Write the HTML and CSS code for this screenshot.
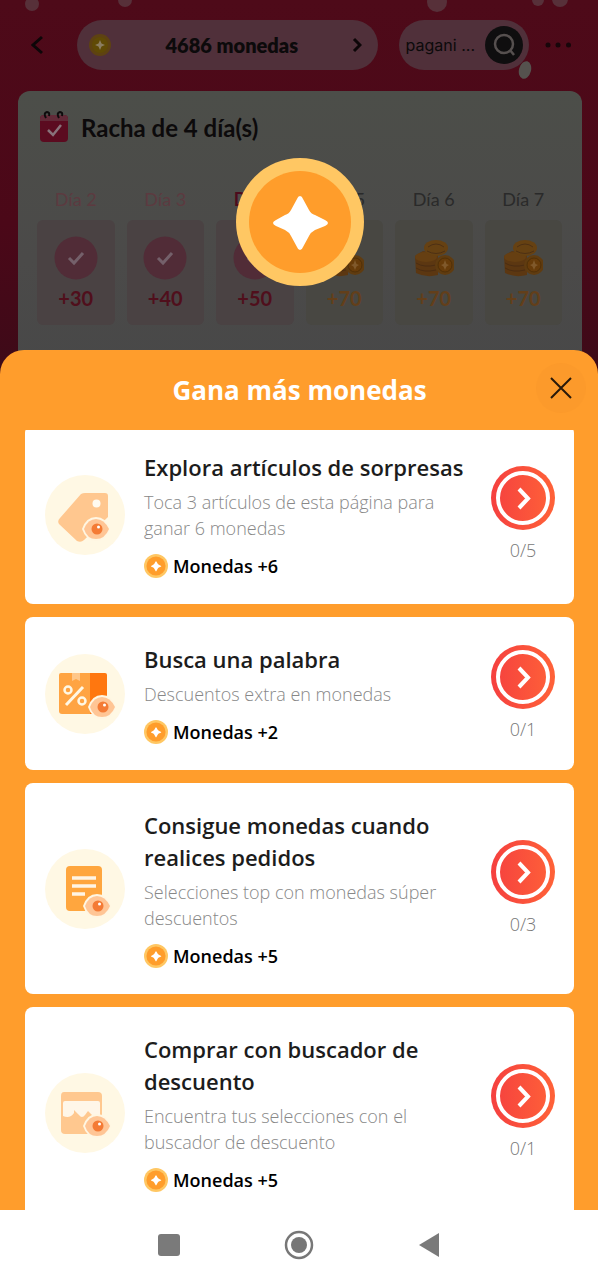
FILE: index.html
```html
<!DOCTYPE html>
<html lang="es">
<head>
<meta charset="utf-8">
<meta name="viewport" content="width=device-width, initial-scale=1">
<title>Gana más monedas</title>
<link rel="stylesheet" href="styles.css">
</head>
<body>
<svg class="defs" aria-hidden="true">
  <defs>
    <linearGradient id="red" x1="0" y1="0" x2="1" y2="0"><stop offset="0" stop-color="#f5403f"/><stop offset="1" stop-color="#ff6238"/></linearGradient>
    <symbol id="coin" viewBox="0 0 128 128">
      <circle cx="64" cy="64" r="64" fill="#ffc763"/><circle cx="64" cy="64" r="51" fill="#ff9d2b"/>
      <path d="M64 38Q66 38 67 41L73 52Q75 56 79 57L89 62Q92 63.500 92 65Q92 66.500 89 68L79 72Q75 74 73 78L67 89Q66 92 64 92Q62 92 61 89L55 78Q53 74 49 72L40 68Q37 66.500 37 65Q37 63.500 40 62L49 57Q53 56 55 52L61 41Q62 38 64 38Z" fill="#fff"/>
    </symbol>
    <symbol id="go" viewBox="0 0 64 64">
      <circle cx="32" cy="32" r="32" fill="url(#red)"/><circle cx="32" cy="32" r="25" fill="none" stroke="#fff" stroke-width="4"/>
      <path d="M28 23L37 32.500L28 42" fill="none" stroke="#fff" stroke-width="4"/>
    </symbol>
    <symbol id="eye" viewBox="0 0 28 24">
      <path d="M0 12Q4 0 14 0T28 12Q24 24 14 24T0 12Z" fill="#fff6e2"/>
      <path d="M2 12Q6 2 14 2T27 12Q23 22 14 22T2 12Z" fill="#ffc595"/>
      <circle cx="15" cy="12" r="5.500" fill="#f47b35"/><circle cx="16.500" cy="10" r="1.500" fill="#fff"/>
    </symbol>
    <symbol id="done" viewBox="0 0 44 44">
      <circle cx="22" cy="22" r="21.500" fill="#512c37"/><path d="M15 22L20 27L29 17" fill="none" stroke="#74606a" stroke-width="3"/>
    </symbol>
    <symbol id="pile" viewBox="0 0 40 38">
      <path d="M1 17L9 12L24 15V36Q12 39 2 34Z" fill="#5c3711"/>
      <ellipse cx="12" cy="18" rx="11" ry="5" fill="#663f12"/>
      <path d="M2 24Q10 29 22 26M2 29Q10 34 22 31" fill="none" stroke="#4b2d12" stroke-width="1"/>
      <ellipse cx="22" cy="9" rx="12" ry="8" fill="#664112"/><path d="M14 8Q22 2 30 8M13 12Q22 17 31 12" fill="none" stroke="#4d3014" stroke-width="1"/>
      <circle cx="31" cy="26" r="10" fill="#603c10"/><circle cx="31" cy="26" r="7" fill="#683c0a" stroke="#503008"/>
      <path d="M31 21L32.500 25L35 26L32.500 27.500L31 31L29.500 27.500L27 26L29.500 25Z" fill="#80592b"/>
    </symbol>
  </defs>
</svg>

<div class="screen">
  <section class="scene">
    <svg class="snow" viewBox="0 0 598 90" aria-hidden="true">
      <g fill="#573039"><circle cx="32" cy="4" r="7"/><circle cx="125" cy="0" r="7"/><circle cx="437" cy="2" r="10"/><circle cx="538" cy="0" r="6"/><circle cx="560" cy="-1" r="8"/></g>
    </svg>
    <header class="topbar">
      <button class="plain back" aria-label="Volver"><svg width="12" height="20" viewBox="0 0 12 20"><path d="M11 2L2 10L11 18" fill="none" stroke="#0d0608" stroke-width="3"/></svg></button>
      <button class="plain pill balance">
        <svg width="24" height="24" viewBox="0 0 24 24"><circle cx="12" cy="12" r="11" fill="#5e4212"/><circle cx="12" cy="12" r="8" fill="#604a05"/><path d="M12 7L13.500 10.500L17 12L13.500 13.500L12 17L10.500 13.500L7 12L10.500 10.500Z" fill="#8b7d60"/></svg>
        <span class="balance-text">4686 monedas</span>
        <svg width="10" height="16" viewBox="0 0 10 16"><path d="M2 2L8 8L2 14" fill="none" stroke="#0d0608" stroke-width="3"/></svg>
      </button>
      <button class="plain pill search" aria-label="Buscar pagani">
        <span>pagani ...</span>
        <svg width="38" height="38" viewBox="0 0 38 38"><circle cx="19" cy="19" r="19" fill="#0f0e0f"/><circle cx="19" cy="18" r="9" fill="none" stroke="#56504f" stroke-width="2.500"/><path d="M25 24L29 29" stroke="#56504f" stroke-width="2.500"/></svg>
        <svg class="flake" width="14" height="20" viewBox="0 0 14 20" aria-hidden="true"><ellipse cx="7" cy="10" rx="6" ry="9" fill="#55524e" transform="rotate(15 7 10)"/></svg>
      </button>
      <button class="plain" aria-label="Más opciones"><svg width="28" height="8" viewBox="0 0 28 8" fill="#17060a"><circle cx="4" cy="4" r="2.500"/><circle cx="14" cy="4" r="2.500"/><circle cx="24.500" cy="4" r="2.500"/></svg></button>
    </header>
    <div class="streak">
      <h1 class="streak-title">
        <svg width="30" height="32" viewBox="0 0 30 32"><rect x="1" y="4" width="28" height="27" rx="4" fill="#5b0b20"/><path d="M1 10V8Q1 4 5 4H25Q29 4 29 8V10Z" fill="#622a38"/><path d="M7 7Q4 2 8 1Q11 1 10 5M20 7Q17 2 21 1Q24 1 23 5" fill="none" stroke="#0e0b0c" stroke-width="2"/><path d="M9 19L14 24L22 14" fill="none" stroke="#88727a" stroke-width="2.500"/></svg>
        <span>Racha de 4 día(s)</span>
      </h1>
      <ol class="days">
        <li class="day past"><span class="day-name">Día 2</span><span class="tile"><svg width="44" height="44"><use href="#done"/></svg><b>+30</b></span></li>
        <li class="day past"><span class="day-name">Día 3</span><span class="tile"><svg width="44" height="44"><use href="#done"/></svg><b>+40</b></span></li>
        <li class="day past today"><span class="day-name">Día 4</span><span class="tile"><svg width="44" height="44"><use href="#done"/></svg><b>+50</b></span></li>
        <li class="day"><span class="day-name">Día 5</span><span class="tile"><svg width="40" height="44"><use href="#pile"/></svg><b>+70</b></span></li>
        <li class="day"><span class="day-name">Día 6</span><span class="tile"><svg width="40" height="44"><use href="#pile"/></svg><b>+70</b></span></li>
        <li class="day"><span class="day-name">Día 7</span><span class="tile"><svg width="40" height="44"><use href="#pile"/></svg><b>+70</b></span></li>
      </ol>
    </div>
    <svg class="big-coin" width="128" height="128" aria-hidden="true"><use href="#coin"/></svg>
  </section>

  <main class="sheet">
    <header class="sheet-head">
      <h2>Gana más monedas</h2>
      <button class="plain close" aria-label="Cerrar"><svg width="22" height="22" viewBox="0 0 22 22"><path d="M1 1L21 21M21 1L1 21" stroke="#28190a" stroke-width="2"/></svg></button>
    </header>
    <div class="tasks">
      <article class="task">
        <svg class="task-icon" viewBox="0 0 80 80"><circle cx="40" cy="40" r="40" fill="#fff8e4"/><path d="M36 19Q38 18 40 18H60Q63 18 63 21V42L39 65Q36 68 32 66L14 49Q12 46 15 43Z" fill="#ffc78f"/><circle cx="51.500" cy="28.500" r="4" fill="#fffaf0"/><use href="#eye" x="37" y="42" width="28" height="24"/></svg>
        <div class="task-body"><h3>Explora artículos de sorpresas</h3><p>Toca 3 artículos de esta página para ganar 6 monedas</p><div class="reward"><svg width="24" height="24"><use href="#coin"/></svg><span>Monedas +6</span></div></div>
        <div class="task-side"><button class="plain" aria-label="Explora artículos de sorpresas"><svg width="64" height="64"><use href="#go"/></svg></button><span>0/5</span></div>
      </article>
      <article class="task">
        <svg class="task-icon" viewBox="0 0 80 80"><circle cx="40" cy="40" r="40" fill="#fff8e4"/><path d="M16 19H46V60H17Q14 60 14 57V21Q14 19 16 19Z" fill="#ffa442"/><path d="M45 19H60Q62 19 62 21V60H45Z" fill="#ff770f"/><path d="M27 19H35V27L31 25L27 27Z" fill="#ffc78a"/><path d="M38 33L21 51" stroke="#fff8e4" stroke-width="3"/><circle cx="23" cy="36" r="3.500" fill="none" stroke="#fff8e4" stroke-width="2.500"/><circle cx="37" cy="47" r="3.500" fill="none" stroke="#fff8e4" stroke-width="2.500"/><use href="#eye" x="43" y="41" width="28" height="24"/></svg>
        <div class="task-body"><h3>Busca una palabra</h3><p>Descuentos extra en monedas</p><div class="reward"><svg width="24" height="24"><use href="#coin"/></svg><span>Monedas +2</span></div></div>
        <div class="task-side"><button class="plain" aria-label="Busca una palabra"><svg width="64" height="64"><use href="#go"/></svg></button><span>0/1</span></div>
      </article>
      <article class="task">
        <svg class="task-icon" viewBox="0 0 80 80"><circle cx="40" cy="40" r="40" fill="#fff8e4"/><rect x="21" y="17" width="36" height="45" rx="4" fill="#ffa63e"/><path d="M27 29H51M27 37H51M27 45H40" stroke="#fff5e5" stroke-width="3.500"/><use href="#eye" x="38" y="45" width="28" height="24"/></svg>
        <div class="task-body"><h3>Consigue monedas cuando realices pedidos</h3><p>Selecciones top con monedas súper descuentos</p><div class="reward"><svg width="24" height="24"><use href="#coin"/></svg><span>Monedas +5</span></div></div>
        <div class="task-side"><button class="plain" aria-label="Consigue monedas cuando realices pedidos"><svg width="64" height="64"><use href="#go"/></svg></button><span>0/3</span></div>
      </article>
      <article class="task">
        <svg class="task-icon" viewBox="0 0 80 80"><circle cx="40" cy="40" r="40" fill="#fff8e4"/><path d="M19 19H53Q57 19 57 23V44Q57 61 53 61H20Q16 61 16 57V23Q16 19 19 19Z" fill="#ffc88f"/><path d="M20 28H53Q55 28 55 30V42Q51 46 47 42L43 38L40 42Q37 46 34 42L29 37V40Q25 46 18 43V30Q18 28 20 28Z" fill="#fff6e8"/><use href="#eye" x="38" y="41" width="28" height="24"/></svg>
        <div class="task-body"><h3>Comprar con buscador de descuento</h3><p>Encuentra tus selecciones con el buscador de descuento</p><div class="reward"><svg width="24" height="24"><use href="#coin"/></svg><span>Monedas +5</span></div></div>
        <div class="task-side"><button class="plain" aria-label="Comprar con buscador de descuento"><svg width="64" height="64"><use href="#go"/></svg></button><span>0/1</span></div>
      </article>
    </div>
  </main>

  <nav class="system">
    <button class="plain" aria-label="Recientes"><svg width="22" height="22"><rect width="22" height="22" rx="3" fill="#7a7a7a"/></svg></button>
    <button class="plain" aria-label="Inicio"><svg width="30" height="30"><circle cx="15" cy="15" r="13" fill="none" stroke="#777" stroke-width="2.500"/><circle cx="15" cy="15" r="8" fill="#777"/></svg></button>
    <button class="plain" aria-label="Atrás"><svg width="20" height="24"><path d="M0 12L20 0V24Z" fill="#7a7a7a"/></svg></button>
  </nav>
</div>
</body>
</html>
```

FILE: styles.css
```css
* { box-sizing: border-box; }
body { margin: 0; font-family: "Open Sans", "Noto Sans", sans-serif; color: #1c1c1c; }
h1, h2, h3, p, ol { margin: 0; padding: 0; }
svg { display: block; flex: none; }
.defs { position: absolute; width: 0; height: 0; }
.plain { border: 0; padding: 0; margin: 0; background: none; font: inherit; color: inherit; cursor: pointer; }

.screen { display: flex; flex-direction: column; height: 100vh; }

.scene { position: relative; flex: none; padding: 20px 16px 0 18px; background: linear-gradient(#4e0a19, #4b0818 60%, #3d0a18); color: #0c0a0b; }
.snow { position: absolute; top: 0; left: 0; width: 100%; }
.topbar { display: flex; align-items: center; height: 50px; padding: 0 10px 0 13px; }
.pill { display: flex; align-items: center; height: 50px; border-radius: 25px; background: #50303a; }
.balance { flex: 1; justify-content: space-between; margin: 0 21px 0 34px; padding: 0 16px 0 11px; font: 800 20px Lato, sans-serif; }
.search { position: relative; gap: 10px; margin-right: 15px; padding: 0 6px 0 7px; font: 400 16px Inter, sans-serif; }
.flake { position: absolute; right: -3px; bottom: -10px; }

.streak { margin-top: 21px; padding: 17px 20px 49px 19px; border-radius: 12px 12px 0 0; background: linear-gradient(#4c4e49, #4b4a49 60%, #484848); }
.streak-title { display: flex; align-items: center; gap: 12px; height: 38px; padding-left: 2px; font: 700 24px Lato, sans-serif; }
.days { display: grid; grid-template-columns: repeat(6, 1fr); gap: 12px; margin-top: 40px; list-style: none; }
.day { display: flex; flex-direction: column; gap: 8px; text-align: center; font: 400 18px/26px Lato, sans-serif; color: #2a2a2a; }
.tile { display: flex; flex-direction: column; align-items: center; gap: 5px; padding: 16px 0 14px; border-radius: 6px; background: #484742; font-size: 20px; color: #633f1a; }
.past { color: #5c3a40; }
.today .day-name { color: #4d0b1c; font-weight: 700; }
.past .tile { background: #4a4243; color: #500f1c; }
.big-coin { position: absolute; top: 158px; left: calc(50% - 63px); }

.sheet { position: relative; display: flex; flex-direction: column; flex: 1; min-height: 0; margin-top: -24px; padding: 0 24px 0 25px; border-radius: 24px 24px 0 0; background: #ff9d2c; }
.sheet-head { display: grid; grid-template-columns: 50px 1fr 50px; align-items: center; flex: none; height: 80px; margin-right: -12px; margin-left: -12px; }
.sheet-head h2 { grid-column: 2; text-align: center; font-size: 26px; line-height: 40px; font-weight: 700; color: #fff; }
.close { display: grid; place-items: center; width: 50px; height: 50px; margin-bottom: 4px; border-radius: 50%; background: #fc9a2b; }
.tasks { flex: 1; min-height: 0; overflow: hidden; }
.task { display: flex; align-items: center; margin-bottom: 13px; padding: 26px 19px 26px 20px; border-radius: 8px; background: #fff; }
.task:first-child { margin-top: -5px; }
.task-icon { width: 80px; height: 80px; }
.task-body { flex: 1; min-width: 0; padding: 0 12px 0 19px; }
.task h3 { font-size: 22px; line-height: 32px; font-weight: 600; }
.task p { margin: 6px 0 13px; font-size: 18px; line-height: 26px; font-weight: 300; color: #888; }
.reward { display: flex; align-items: center; gap: 5px; font-size: 18px; line-height: 24px; font-weight: 600; color: #000; }
.task-side { display: flex; flex-direction: column; align-items: center; gap: 7px; font-size: 18px; line-height: 26px; font-weight: 300; color: #777; }

.system { display: grid; grid-template-columns: repeat(3, 130px); justify-content: center; align-items: center; flex: none; height: 70px; background: #fff; }
.system button { display: grid; place-items: center; }
```
